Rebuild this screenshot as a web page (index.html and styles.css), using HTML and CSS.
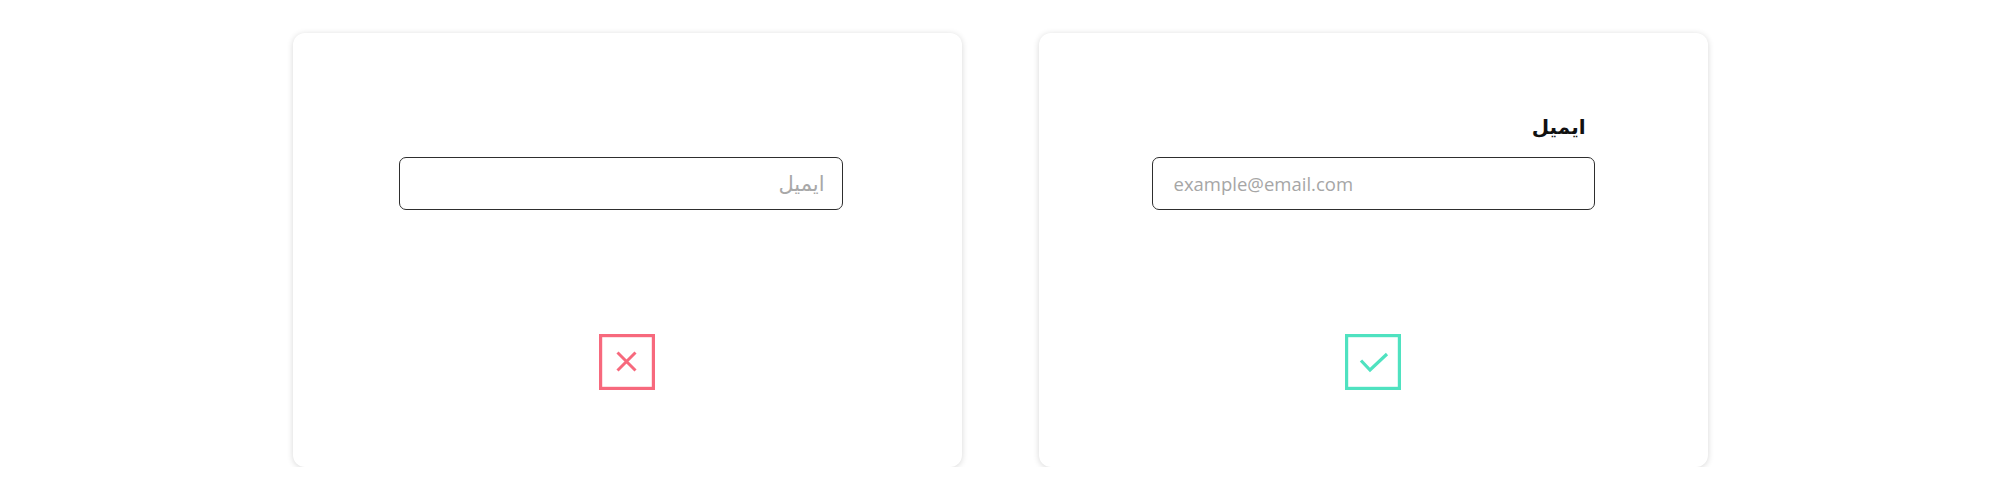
FILE: index.html
```html
<!DOCTYPE html>
<html lang="fa">
<head>
<meta charset="utf-8">
<title>Email field</title>
<link rel="stylesheet" href="styles.css">
</head>
<body>
<main class="stage">
  <section class="card">
    <div class="field field--offset" dir="rtl">
      <div class="label-row"></div>
      <div class="input input--rtl"><span class="placeholder placeholder--fa">ايميل</span></div>
    </div>
    <div class="mark mark--bad">
      <svg width="56" height="56" viewBox="0 0 56 56" fill="none">
        <rect x="1.6" y="1.6" width="52.8" height="52.8" stroke="#f7697d" stroke-width="3.2"/>
        <path d="M18.5 18.5 L36.5 36.5 M36.5 18.5 L18.5 36.5" stroke="#f7697d" stroke-width="3"/>
      </svg>
    </div>
  </section>
  <section class="card">
    <div class="field" dir="rtl">
      <div class="label-row"><span class="label">ايميل</span></div>
      <div class="input input--ltr" dir="ltr"><span class="placeholder">example@email.com</span></div>
    </div>
    <div class="mark mark--good">
      <svg width="56" height="56" viewBox="0 0 56 56" fill="none">
        <rect x="1.6" y="1.6" width="52.8" height="52.8" stroke="#4fe2c0" stroke-width="3.2"/>
        <path d="M16 26.5 L25 36 L42 20" stroke="#4fe2c0" stroke-width="3.2"/>
      </svg>
    </div>
  </section>
</main>
</body>
</html>
```

FILE: styles.css
```css
html, body {
  margin: 0;
  padding: 0;
  background: #ffffff;
}

.stage {
  display: flex;
  justify-content: center;
  gap: 77px;
  padding-top: 33px;
}

.card {
  box-sizing: border-box;
  width: 669px;
  height: 434px;
  border-radius: 12px;
  background: #ffffff;
  box-shadow: 0 1px 6px rgba(0, 0, 0, 0.16);
  display: flex;
  flex-direction: column;
  align-items: center;
  padding-top: 80px;
}

.field {
  width: 443px;
  display: flex;
  flex-direction: column;
}

.field--offset {
  width: 444px;
  margin-right: 13px;
}

.label-row {
  height: 44px;
  display: flex;
  align-items: flex-end;
  padding-right: 9px;
  box-sizing: border-box;
  padding-bottom: 18px;
}

.label {
  font-family: "DejaVu Sans", sans-serif;
  font-weight: bold;
  font-size: 20px;
  line-height: 24px;
  color: #111111;
}

.input {
  box-sizing: border-box;
  height: 53px;
  border: 1px solid #2e2e2e;
  border-radius: 7px;
  display: flex;
  align-items: center;
}

.input--rtl {
  padding-right: 17px;
}

.input--ltr {
  padding-left: 21px;
}

.placeholder {
  font-family: "Open Sans", sans-serif;
  font-size: 18.5px;
  color: #a6a6a6;
}

.placeholder--fa {
  font-family: "DejaVu Sans", sans-serif;
  font-size: 21px;
  color: #a8a8a8;
}

.mark {
  margin-top: 124px;
  width: 56px;
  height: 56px;
}

.mark svg {
  display: block;
}
```
